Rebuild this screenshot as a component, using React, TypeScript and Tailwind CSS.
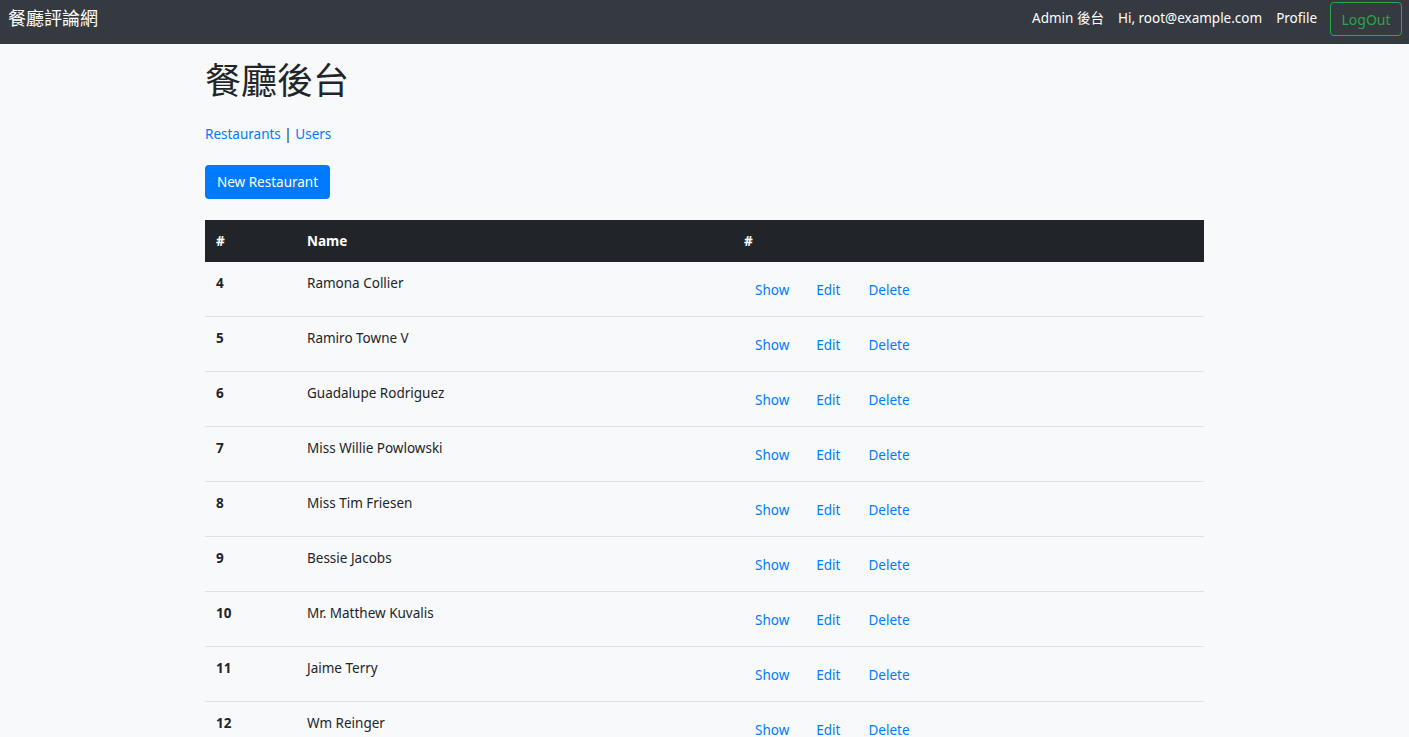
import React from "react";

const rows: [number, string][] = [
  [4, "Ramona Collier"],
  [5, "Ramiro Towne V"],
  [6, "Guadalupe Rodriguez"],
  [7, "Miss Willie Powlowski"],
  [8, "Miss Tim Friesen"],
  [9, "Bessie Jacobs"],
  [10, "Mr. Matthew Kuvalis"],
  [11, "Jaime Terry"],
  [12, "Wm Reinger"],
];

export default function App() {
  return (
    <div className="min-h-[737px] bg-[#f8f9fa] text-[#212529] text-[13.5px] leading-[21px] font-['Noto_Sans','Noto_Sans_CJK_TC',sans-serif]">
      <nav className="h-[44px] bg-[#343a40] flex items-start justify-between pl-[8px] pr-[7px]">
        <div className="text-white text-[18px] leading-[27px] pt-[5px]">餐廳評論網</div>
        <div className="flex items-start">
          <span className="text-white pt-[8px] mr-[14px]">Admin 後台</span>
          <span className="text-white pt-[8px] mr-[14px]">Hi, root@example.com</span>
          <span className="text-white pt-[8px] mr-[13px]">Profile</span>
          <button className="mt-[2px] h-[34px] w-[72px] border border-[#28a745] rounded-[4px] text-[#28a745] text-[14px]">
            LogOut
          </button>
        </div>
      </nav>
      <div className="w-[999px] ml-[205px] pt-[16px]">
        <h1 className="text-[36px] leading-[42px] font-normal">餐廳後台</h1>
        <div className="mt-[22px]">
          <a className="text-[#007bff]">Restaurants</a> | <a className="text-[#007bff]">Users</a>
        </div>
        <button className="mt-[20px] h-[34px] px-[12px] bg-[#007bff] text-white rounded-[4px] text-[13.5px]">
          New Restaurant
        </button>
        <table className="mt-[21px] w-full border-collapse">
          <thead>
            <tr className="bg-[#212529] text-white h-[42px]">
              <th className="w-[90px] text-left px-[11px] font-bold">#</th>
              <th className="w-[437px] text-left px-[12px] font-bold">Name</th>
              <th className="text-left px-[12px] font-bold">#</th>
            </tr>
          </thead>
          <tbody>
            {rows.map(([id, name]) => (
              <tr key={id} className="border-b border-[#dee2e6]">
                <td className="align-top px-[11px] pt-[11px] pb-[8px] font-bold">{id}</td>
                <td className="align-top px-[12px] pt-[11px] pb-[8px]">{name}</td>
                <td className="align-top px-[12px] pt-[11px] pb-[8px]">
                  <div className="flex gap-[4px] pt-[7px] pb-[7px] text-[#007bff]">
                    <span className="px-[11px]">Show</span>
                    <span className="px-[12px]">Edit</span>
                    <span className="px-[12px]">Delete</span>
                  </div>
                </td>
              </tr>
            ))}
          </tbody>
        </table>
      </div>
    </div>
  );
}
